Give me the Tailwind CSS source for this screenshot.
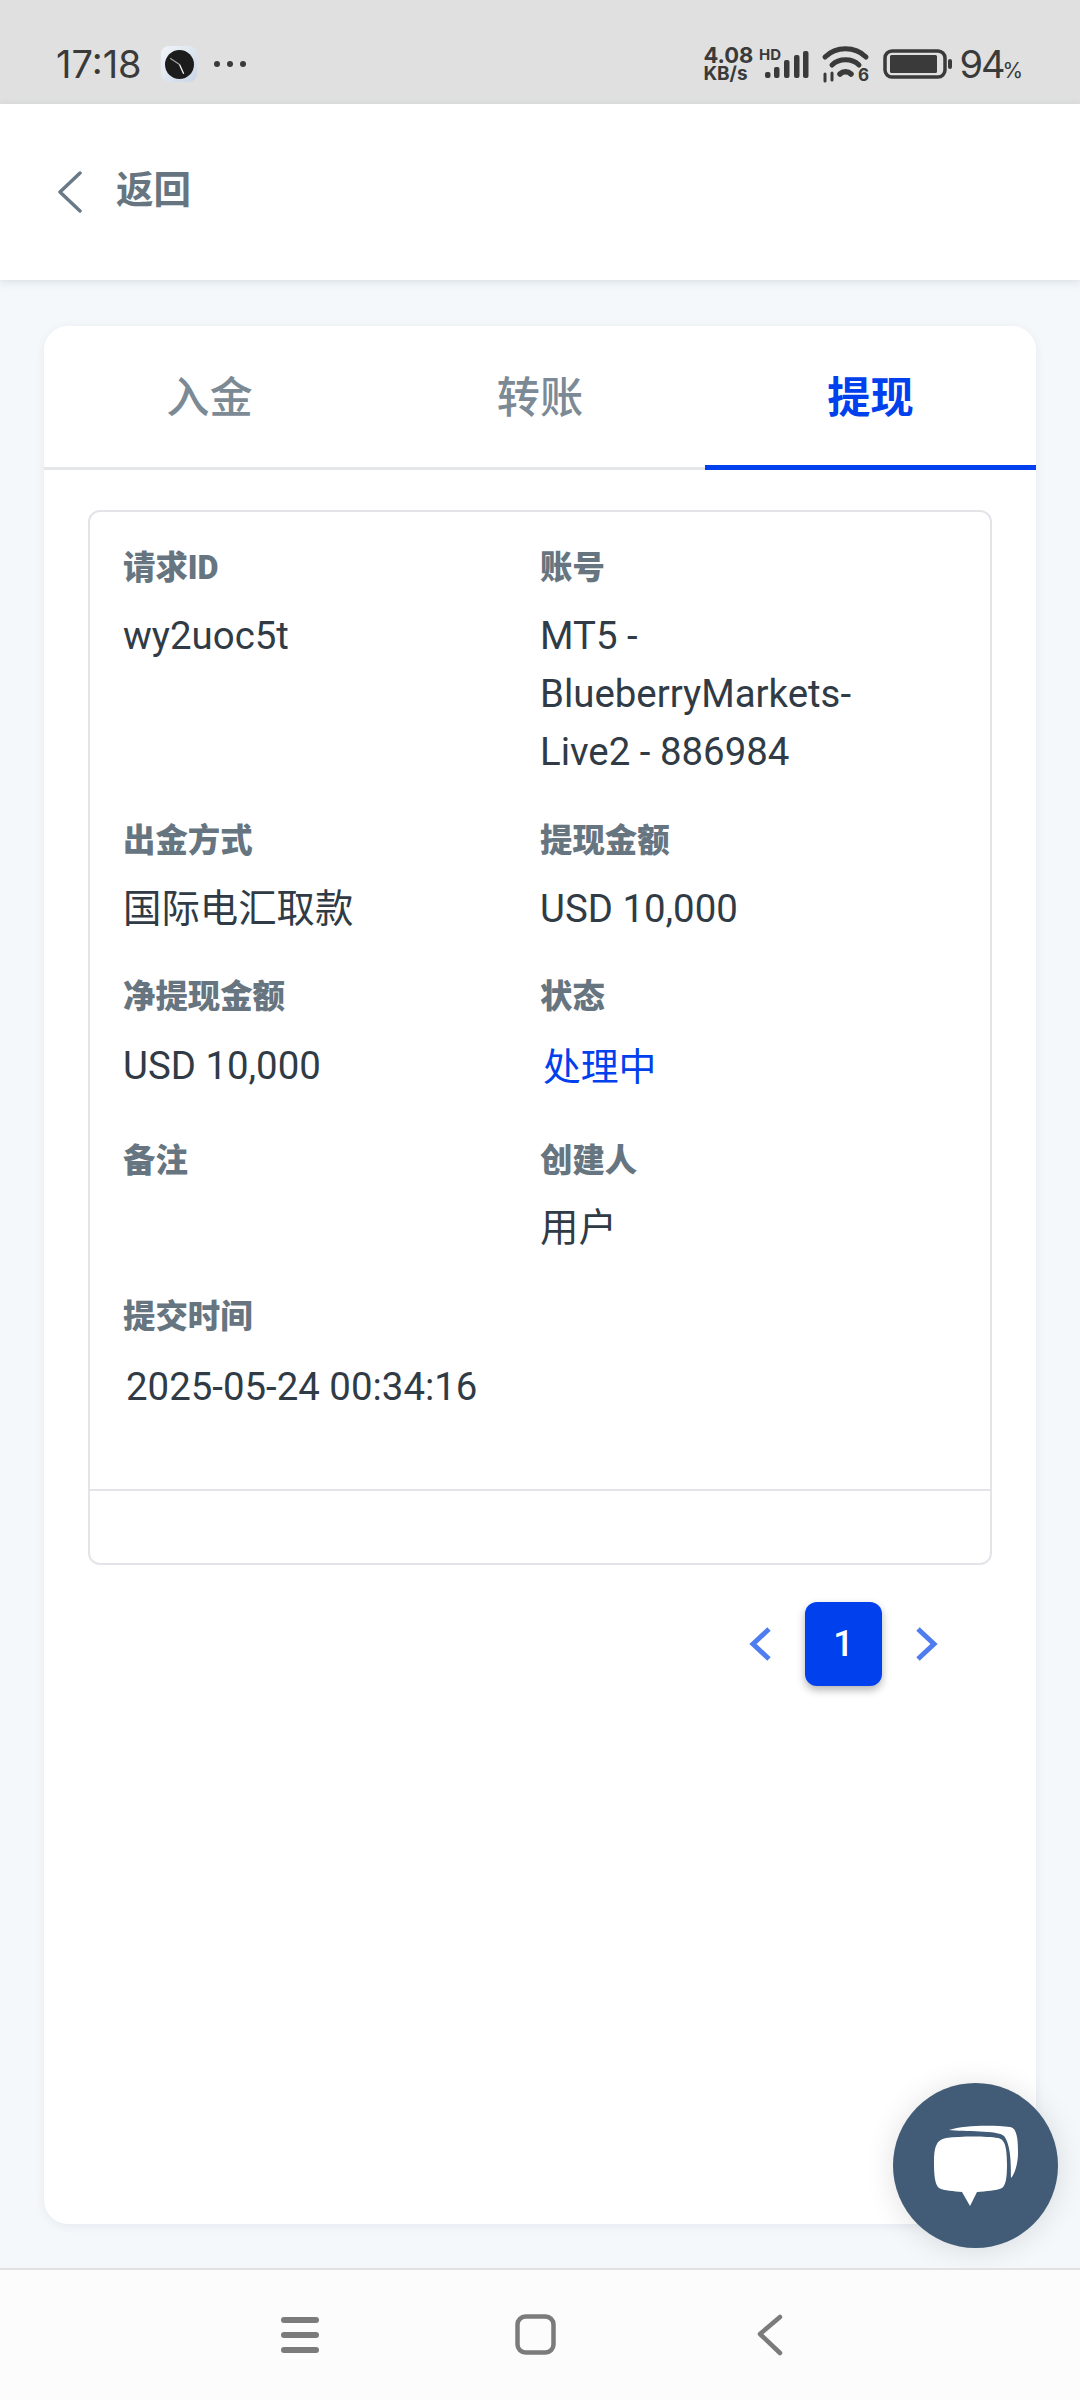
<!DOCTYPE html>
<html lang="zh">
<head>
  <meta charset="UTF-8">
  <meta name="viewport" content="width=device-width, initial-scale=1.0">
  <title>提现</title>
  <script src="https://cdn.jsdelivr.net/npm/@tailwindcss/browser@4"></script>
</head>
<body class="relative w-[1080px] h-[2400px] overflow-hidden bg-[#f4f8fb] font-['Roboto','Noto_Sans_CJK_SC',sans-serif] text-[#303b46]">

  <!-- Status bar -->
  <div class="h-[104px] bg-[#e0e0e0] flex items-center justify-between pt-[24px] pl-[56px] pr-[57px] text-[#3a3a3a]">
    <div class="flex items-center">
      <span class="w-[85px] text-[38px] leading-none font-['Inter',sans-serif] whitespace-nowrap">17:18</span>
      <div class="ml-[20px] w-[36px] h-[36px] rounded-[8px] bg-gradient-to-br from-[#f2f5f9] to-[#c9d6e6] flex items-center justify-center">
        <svg width="29" height="29" viewBox="0 0 28 28">
          <circle cx="14" cy="14" r="14" fill="#1c1c1c"/>
          <path d="M14 14L5 8" stroke="#aaa" stroke-width="1"/>
          <path d="M14 14L18 23" stroke="#fff" stroke-width="1.2"/>
        </svg>
      </div>
      <div class="ml-[17px] flex gap-[7px]">
        <span class="w-[6px] h-[6px] rounded-full bg-[#3a3a3a]"></span>
        <span class="w-[6px] h-[6px] rounded-full bg-[#3a3a3a]"></span>
        <span class="w-[6px] h-[6px] rounded-full bg-[#3a3a3a]"></span>
      </div>
    </div>
    <div class="flex items-center">
      <div class="flex flex-col w-[54px] font-bold font-['Inter',sans-serif]">
        <span class="text-[22px] leading-[20px]">4.08</span>
        <span class="text-[19px] leading-[18px]">KB/s</span>
      </div>
      <svg width="54" height="32" viewBox="0 0 54 32" fill="#3a3a3a" class="overflow-visible">
        <text x="2" y="12" font-size="15" font-weight="700" font-family="Inter">HD</text>
        <rect x="8" y="24" width="5.5" height="6" rx="2"/>
        <rect x="17" y="19" width="5.5" height="11" rx="2"/>
        <rect x="27" y="12" width="5.5" height="18" rx="2"/>
        <rect x="37" y="7" width="5.5" height="23" rx="2"/>
        <rect x="46" y="3" width="5.5" height="27" rx="2"/>
      </svg>
      <svg width="47" height="35" viewBox="0 0 47 35" class="ml-[11px] overflow-visible" fill="none" stroke="#3a3a3a" stroke-width="5" stroke-linecap="round">
        <path d="M3 10C14 -1 33 -1 44 10"/>
        <path d="M10 18C17 11 30 11 37 18"/>
        <path d="M18 27C21 24 26 24 29 27" stroke-width="5.5"/>
        <path d="M3 27v7M10 26v7" stroke-width="3"/>
        <text x="36" y="34" font-size="17" font-weight="700" font-family="Inter" fill="#3a3a3a" stroke="none">6</text>
      </svg>
      <svg width="70" height="30" viewBox="0 0 70 30" class="ml-[14px]">
        <rect x="2" y="2" width="60" height="26" rx="7" fill="none" stroke="#3a3a3a" stroke-width="3.5"/>
        <rect x="7" y="6" width="47" height="18" rx="1.5" fill="#3a3a3a"/>
        <rect x="65" y="10" width="4" height="10" rx="2" fill="#3a3a3a"/>
      </svg>
      <span class="ml-[6px] w-[43px] text-[38px] leading-none font-['Inter',sans-serif] tracking-[-2px]">94</span>
      <span class="text-[21px] leading-none mt-[12px] font-['Inter',sans-serif]">%</span>
    </div>
  </div>

  <!-- Header -->
  <div class="h-[176px] bg-white flex items-center pl-[58px] shadow-[0_2px_8px_rgba(60,80,100,0.15)] relative">
    <svg width="24" height="42" viewBox="0 0 24 42" fill="none" stroke="#6a7986" stroke-width="3.5" stroke-linecap="round" stroke-linejoin="round">
      <path d="M22 2L2 21L22 40"/>
    </svg>
    <span class="ml-[34px] mb-[2px] text-[37.5px] font-bold text-[#66757f] leading-none">返回</span>
  </div>

  <!-- Card -->
  <div class="mt-[46px] mx-[44px] h-[1898px] bg-white rounded-[24px] shadow-[0_2px_10px_rgba(60,80,100,0.08)] overflow-hidden">
    <div class="flex h-[144px] border-b-[3px] border-[#e4e6e8]">
      <div class="w-[331px] h-[144px] pt-[2px] flex items-center justify-center text-[43.2px] font-medium text-[#7c8a95]">入金</div>
      <div class="w-[330px] h-[144px] pt-[2px] flex items-center justify-center text-[43.2px] font-medium text-[#7c8a95]">转账</div>
      <div class="w-[331px] h-[144px] pt-[7px] flex items-center justify-center text-[43.2px] font-bold text-[#0040ed] border-b-[5px] border-[#0040ed]">提现</div>
    </div>

    <div class="mt-[40px] mx-[44px] h-[1055px] border-2 border-[#e2e4e8] rounded-[12px] flex flex-col">
      <div class="h-[977px] pt-[36px] pl-[33px] grid grid-cols-[417px_1fr] grid-rows-[273px_156px_164px_156px_auto]">
        <div>
          <div class="text-[32.4px] leading-[40px] font-black text-[#66757f]">请求ID</div>
          <div class="mt-[19px] text-[38.4px] leading-[58px]">wy2uoc5t</div>
        </div>
        <div>
          <div class="text-[32.4px] leading-[40px] font-black text-[#66757f]">账号</div>
          <div class="mt-[19px] text-[38.4px] leading-[58px] w-[340px]">MT5 - BlueberryMarkets-Live2 - 886984</div>
        </div>
        <div>
          <div class="text-[32.4px] leading-[40px] font-black text-[#66757f]">出金方式</div>
          <div class="mt-[19px] text-[38.4px] leading-[58px]">国际电汇取款</div>
        </div>
        <div>
          <div class="text-[32.4px] leading-[40px] font-black text-[#66757f]">提现金额</div>
          <div class="mt-[19px] text-[38.4px] leading-[58px]">USD 10,000</div>
        </div>
        <div>
          <div class="text-[32.4px] leading-[40px] font-black text-[#66757f]">净提现金额</div>
          <div class="mt-[20px] text-[38.4px] leading-[58px]">USD 10,000</div>
        </div>
        <div>
          <div class="text-[32.4px] leading-[40px] font-black text-[#66757f]">状态</div>
          <div class="mt-[21px] pl-[3px] text-[37.8px] leading-[58px] text-[#0040ed]">处理中</div>
        </div>
        <div>
          <div class="text-[32.4px] leading-[40px] font-black text-[#66757f]">备注</div>
        </div>
        <div>
          <div class="text-[32.4px] leading-[40px] font-black text-[#66757f]">创建人</div>
          <div class="mt-[18px] text-[38.4px] leading-[58px]">用户</div>
        </div>
        <div class="col-span-2">
          <div class="text-[32.4px] leading-[40px] font-black text-[#66757f]">提交时间</div>
          <div class="mt-[21px] pl-[3px] text-[38.4px] leading-[58px]">2025-05-24 00:34:16</div>
        </div>
      </div>
      <div class="border-t-2 border-[#e2e4e8]"></div>
    </div>

    <!-- Pagination -->
    <div class="mt-[37px] flex items-center pl-[705px]">
      <svg width="22" height="34" viewBox="0 0 22 34" fill="none" stroke="#4f7cef" stroke-width="5">
        <path d="M20 2L4 17L20 32"/>
      </svg>
      <div class="ml-[34px] w-[77px] h-[84px] rounded-[12px] bg-[#0040ed] text-white text-[36px] font-medium flex items-center justify-center shadow-[0_4px_8px_rgba(0,0,0,0.3)]">1</div>
      <svg width="22" height="34" viewBox="0 0 22 34" fill="none" stroke="#4f7cef" stroke-width="5" class="ml-[34px]">
        <path d="M2 2L18 17L2 32"/>
      </svg>
    </div>
  </div>

  <!-- Floating chat button -->
  <div class="absolute left-[893px] top-[2083px] w-[165px] h-[165px] rounded-full bg-[#425b76] shadow-[0_2px_30px_rgba(0,0,0,0.12)] flex items-center justify-center">
    <svg width="84" height="82" viewBox="0 0 84 82" fill="#fff">
      <path d="M15 5C30 0 60 0 76 2C82 3 84 10 84 28C84 38 81 49 77 53C77 40 77 20 70 11C64 5 30 7 15 5Z"/>
      <path d="M12 13C28 11 52 11 64 13C70 14 73 20 73 39C73 52 72 60 68 63C62 66 52 66 43 67L36 81L28 67C20 66 10 66 5 63C1 60 0 50 0 39C0 22 2 15 12 13Z"/>
    </svg>
  </div>

  <!-- Navigation bar -->
  <div class="absolute left-0 bottom-0 w-full h-[132px] bg-[#fcfcfc] border-t-2 border-[#e2e2e2]">
    <svg width="38" height="36" viewBox="0 0 38 36" class="absolute left-[281px] top-[47px]" fill="#7b7b7b">
      <rect x="0" y="0" width="38" height="6" rx="3"/>
      <rect x="0" y="15" width="38" height="6" rx="3"/>
      <rect x="0" y="30" width="38" height="6" rx="3"/>
    </svg>
    <svg width="41" height="41" viewBox="0 0 41 41" class="absolute left-[515px] top-[44px]" fill="none" stroke="#7b7b7b" stroke-width="4.5">
      <rect x="2.5" y="2.5" width="36" height="36" rx="8"/>
    </svg>
    <svg width="26" height="42" viewBox="0 0 26 42" class="absolute left-[757px] top-[44px]" fill="none" stroke="#7b7b7b" stroke-width="4.5" stroke-linecap="round" stroke-linejoin="round">
      <path d="M23 3L3 20L23 39"/>
    </svg>
  </div>
</body>
</html>
